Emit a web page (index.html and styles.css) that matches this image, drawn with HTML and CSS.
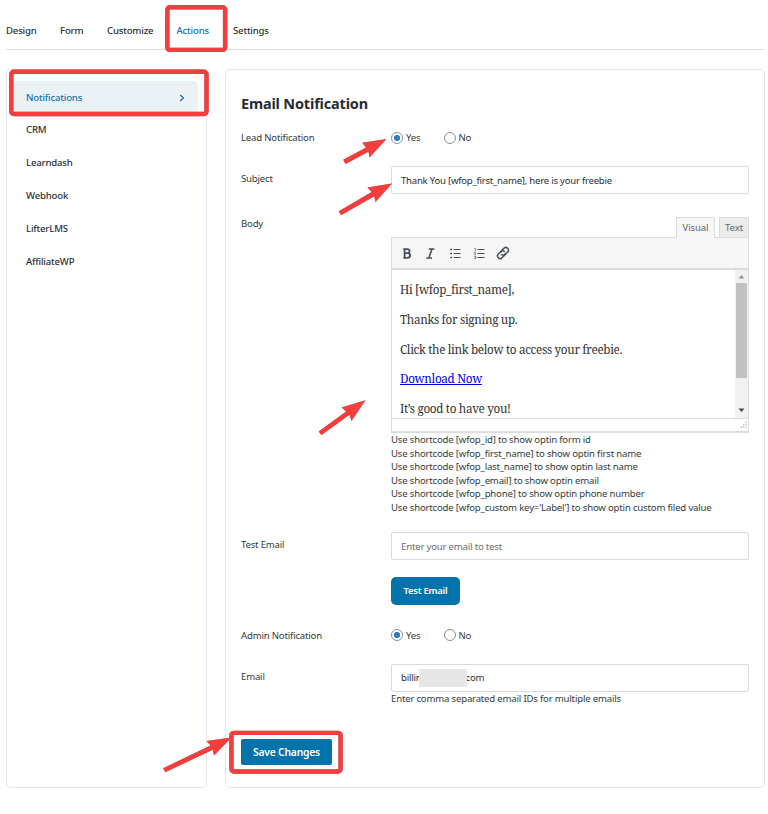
FILE: index.html
```html
<!DOCTYPE html>
<html lang="en">
<head>
<meta charset="utf-8">
<title>Email Notification</title>
<link rel="stylesheet" href="styles.css">
</head>
<body>
<nav class="tabs">
  <a>Design</a><a>Form</a><a>Customize</a><a class="active">Actions</a><a>Settings</a>
</nav>
<div class="layout">
  <aside class="panel side">
    <a class="item active">Notifications
      <svg width="6" height="8" viewBox="0 0 6 8"><path d="M1.2 1L4.4 4L1.2 7" fill="none" stroke="#2b6f9e" stroke-width="1.3"/></svg></a>
    <a class="item">CRM</a>
    <a class="item">Learndash</a>
    <a class="item">Webhook</a>
    <a class="item">LifterLMS</a>
    <a class="item">AffiliateWP</a>
  </aside>
  <main class="panel main">
    <h1>Email Notification</h1>
    <div class="row radios">
      <label>Lead Notification</label>
      <div class="options"><span class="radio on"></span><span class="yes">Yes</span><span class="radio"></span><span>No</span></div>
    </div>
    <div class="row subject">
      <label>Subject</label>
      <div class="input">Thank You [wfop_first_name], here is your freebie</div>
    </div>
    <div class="row body">
      <label>Body</label>
      <div>
        <div class="etabs"><span class="visual">Visual</span><span class="text">Text</span></div>
        <div class="editor">
          <div class="toolbar">
            <svg width="120" height="30" viewBox="0 0 120 30">
              <g fill="none" stroke="#4a5058">
                <path d="M12.6 11.2V19.8M11.3 11.2H15.2C18.3 11.2 18.3 15.2 15.2 15.2H12.6M15.2 15.2C19 15.2 19 19.8 15.2 19.8H11.3" stroke-width="1.8"/>
                <path d="M36.8 11H42.4M34.3 20H40M40 11L36.8 20" stroke-width="1.6"/>
                <path d="M61.5 11.5H68.5M61.5 15.5H68.5M61.5 19.5H68.5" stroke-width="1"/>
                <path d="M58.2 11.5H60M58.2 15.5H60M58.2 19.5H60" stroke-width="1.7"/>
                <path d="M85.5 11.5H92.5M85.5 15.5H92.5M85.5 19.5H92.5" stroke-width="1"/>
                <path d="M82.3 10.5H83.4V13M82.3 14.4H83.7L82.5 16.4H84M82.3 18.2H83.7V20.5H82.3M82.5 19.3H83.7" stroke-width=".7"/>
                <g transform="translate(111 15) rotate(-45)" stroke-width="1.5">
                  <path d="M1.6 1.6A2.6 2.6 0 0 1 -.4 2.6H-4A2.6 2.6 0 0 1-4-2.6H-.4A2.6 2.6 0 0 1 2.1 .5"/>
                  <path d="M-1.6-1.6A2.6 2.6 0 0 1 .4-2.6H4A2.6 2.6 0 0 1 4 2.6H.4A2.6 2.6 0 0 1-2.1-.5"/>
                </g>
              </g>
            </svg>
          </div>
          <div class="content">
            <div class="copy">
              <p>Hi [wfop_first_name],</p>
              <p>Thanks for signing up.</p>
              <p>Click the link below to access your freebie.</p>
              <p><a>Download Now</a></p>
              <p>It’s good to have you!</p>
            </div>
            <div class="scroll">
              <svg width="13" height="13" viewBox="0 0 13 13"><path d="M3.5 8.5L6.5 5L9.5 8.5Z" fill="#969696"/></svg>
              <div class="thumb"></div>
              <svg class="down" width="13" height="13" viewBox="0 0 13 13"><path d="M3.5 3.5L6.5 7L9.5 3.5Z" fill="#484848"/></svg>
            </div>
          </div>
          <div class="status"><svg width="9" height="11" viewBox="0 0 9 11"><path d="M6.5 3h1M4.2 5.5h1M6.5 5.5h1M2 8h1M4.2 8h1M6.5 8h1" stroke="#aaa" stroke-width="1.3"/></svg></div>
        </div>
        <div class="help">
          <div>Use shortcode [wfop_id] to show optin form id</div>
          <div>Use shortcode [wfop_first_name] to show optin first name</div>
          <div>Use shortcode [wfop_last_name] to show optin last name</div>
          <div>Use shortcode [wfop_email] to show optin email</div>
          <div>Use shortcode [wfop_phone] to show optin phone number</div>
          <div>Use shortcode [wfop_custom key='Label'] to show optin custom filed value</div>
        </div>
      </div>
    </div>
    <div class="row test">
      <label>Test Email</label>
      <div><div class="input placeholder">Enter your email to test</div><button class="btn test-btn">Test Email</button></div>
    </div>
    <div class="row radios admin">
      <label>Admin Notification</label>
      <div class="options"><span class="radio on"></span><span class="yes">Yes</span><span class="radio"></span><span>No</span></div>
    </div>
    <div class="row email">
      <label>Email</label>
      <div><div class="input masked"><span class="bill">billin</span><span class="mask"></span><span class="com">com</span></div><div class="help">Enter comma separated email IDs for multiple emails</div></div>
    </div>
    <button class="btn save">Save Changes</button>
  </main>
</div>
<svg class="notes" width="768" height="814" viewBox="0 0 768 814">
  <g fill="none" stroke="#f43d3d" stroke-width="4.4">
    <rect x="167.3" y="7.3" width="57.8" height="42.6" rx="2.5"/>
    <rect x="11.3" y="71.8" width="195.2" height="42.2" rx="2.5"/>
    <rect x="231.4" y="732.9" width="109.2" height="38.6" rx="2.5"/>
  </g>
  <g fill="#f43d3d">
    <path d="M386.5 139L369.5 157.5L368.5 151.8L345.5 164L343.3 159.7L366 147.5L362.3 142.8Z"/>
    <path d="M392 183.5L375.5 202L374.3 196.3L341 215.2L338.8 211.2L371.6 192L367.5 187.5Z"/>
    <path d="M365.5 400.2L351.5 421L349.5 414.8L321.5 435L318.6 431.5L346.2 411.5L341.5 407.5Z"/>
    <path d="M231.5 737.5L214 755.5L212.7 749.7L165.3 772.3L163.2 768.2L210.5 745.5L206.5 741Z"/>
  </g>
</svg>
</body>
</html>
```
FILE: styles.css
```css
* { box-sizing: border-box; }
body { margin: 0; width: 768px; height: 814px; overflow: hidden; position: relative; background: #fff; color: #363b40; font: 9.6px/14px "Noto Sans", "Open Sans", sans-serif; letter-spacing: -.19px; }
.tabs { display: grid; grid-template-columns: 54px 47px 69.5px 56.5px auto; margin: 0 3px 0 6px; height: 50px; border-bottom: 1px solid #dcdee5; font-weight: 500; line-height: 61px; color: #2c3034; }
.tabs .active { color: #1572aa; }
.layout { display: flex; gap: 18px; margin: 19px 3px 0 6px; height: 719px; }
.panel { border: 1px solid #e4e5ee; border-radius: 5px; }
.side { width: 201px; padding: 11px 8px 0 7px; font-weight: 500; }
.item { display: flex; align-items: center; justify-content: space-between; height: 33px; padding: 1px 13px 0 12px; color: #2c3034; white-space: nowrap; }
.item.active { height: 32px; padding-top: 2px; background: #eaf2f6; color: #1572aa; border-radius: 4px; }
.main { flex: 1; padding: 21px 15px 0; }
h1 { margin: 0; font-size: 14.5px; line-height: 24px; font-weight: 700; letter-spacing: -.17px; color: #282b30; white-space: nowrap; }
.row { display: grid; grid-template-columns: 150px 358px; }
.row > label { white-space: nowrap; }
.radios { margin-top: 11px; height: 22px; line-height: 23px; }
.options { display: flex; align-items: center; }
.radio { width: 12px; height: 12px; border: 1px solid #8c8f94; border-radius: 50%; margin-right: 3px; }
.radio.on { background: radial-gradient(circle, #2e7fc0 2.8px, #fff 3.4px); }
.yes { width: 37.5px; }
.subject { margin-top: 18px; line-height: 26px; }
.input { height: 28px; border: 1px solid #dadada; border-radius: 2px; padding: 0 9px; line-height: 27px; background: #fff; color: #2c3034; white-space: nowrap; }
.subject .input { letter-spacing: -.24px; }
.placeholder { color: #6a6e73; }
.body { margin-top: 23px; }
.etabs { display: flex; justify-content: flex-end; gap: 4px; height: 20px; line-height: 20px; text-align: center; color: #646970; letter-spacing: -.1px; }
.etabs span { border: 1px solid #dcdcde; border-bottom: 0; }
.visual { width: 39px; }
.etabs .visual { height: 21px; z-index: 1; background: #f6f6f6; }
.text { width: 30px; background: #ebebeb; }
.editor { border: 1px solid #dcdcde; height: 196px; border-bottom-width: 2px; }
.toolbar { height: 32px; background: #f6f6f6; border-bottom: 2px solid #dcdcde; }
.toolbar svg, .scroll svg { display: block; }
.content { display: flex; height: 148px; }
.copy { flex: 1; overflow: hidden; padding: 5px 8px 0; font: 11.7px/29.8px "Noto Serif", "Liberation Serif", serif; letter-spacing: -.32px; color: #333; }
.copy p { margin: 0; height: 29.8px; white-space: nowrap; }
.copy a { color: #0000e8; text-decoration: underline; }
.scroll { width: 13px; background: #f1f1f1; display: flex; flex-direction: column; }
.thumb { height: 95px; margin: 0 1px; background: #c1c1c1; }
.down { margin-top: auto; }
.status { height: 13px; border-top: 1px solid #dcdcde; display: flex; justify-content: flex-end; }
.help { line-height: 13.6px; white-space: nowrap; }
.test { margin-top: 17.4px; line-height: 26px; }
.btn { display: block; border: 0; padding: 0; background: #0073aa; color: #fff; font: 600 9.4px/28px "Noto Sans", sans-serif; letter-spacing: -.2px; white-space: nowrap; }
.test-btn { width: 69px; height: 28px; border-radius: 5px; margin-top: 17px; }
.admin { margin-top: 19px; }
.email { margin-top: 18px; line-height: 25px; }
.masked { display: flex; align-items: center; }
.bill { width: 17.5px; }
.mask { width: 48px; height: 18px; background: #e6e6e6; z-index: 1; }
.com { margin-left: -1px; }
.save { width: 91px; height: 26px; border-radius: 2px; margin-top: 33px; font-size: 10.3px; line-height: 27px; }
.notes { position: absolute; left: 0; top: 0; filter: drop-shadow(0 .7px .5px rgba(0,0,0,.45)); }
```
